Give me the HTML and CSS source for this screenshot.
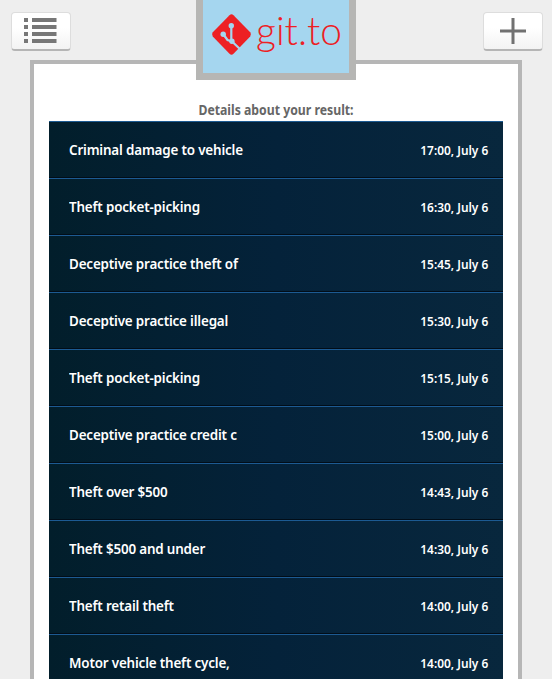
FILE: index.html
```html
<!DOCTYPE html>
<html lang="en">
<head>
<meta charset="utf-8">
<title>git.to</title>
<link rel="stylesheet" href="styles.css">
</head>
<body>
<header class="topbar">
  <button class="btn" aria-label="Menu">
    <svg width="34" height="28" viewBox="0 0 34 28" fill="#777"><path d="M0 1h4v4H0zM8 1h24.500v4H8zM0 8h4v4H0zM8 8h24.500v4H8zM0 15h4v4H0zM8 15h24.500v4H8zM0 22h4v4H0zM8 22h24.500v4H8z"/></svg>
  </button>
  <div class="logo">
    <svg width="146" height="73" viewBox="0 0 146 73">
      <path d="M26.500 15.200Q28.500 13.500 30.500 15.200L47.200 32.200Q49 34.500 47.200 36.500L30.500 53.800Q28.500 55.500 26.500 53.800L9.800 36.500Q8 34.500 9.800 32.200Z" fill="#ed2024"/>
      <path d="M28.300 26V39M20.500 34.500L24.500 40L29 41.500L38 50" fill="none" stroke="#a5d6ef" stroke-width="2.200"/>
      <circle cx="28.300" cy="25.800" r="2.700" fill="#a5d6ef"/><circle cx="20.200" cy="34.200" r="2.700" fill="#a5d6ef"/><circle cx="28.900" cy="41.300" r="2.700" fill="#a5d6ef"/>
      <text class="wordmark" x="53" y="45" textLength="86" lengthAdjust="spacingAndGlyphs">git.to</text>
    </svg>
  </div>
  <button class="btn" aria-label="Add">
    <svg width="26" height="28" viewBox="0 0 26 28" fill="#717171"><path d="M11.500 1h3v11.500H26v3H14.500V27h-3V15.500H0v-3h11.500z"/></svg>
  </button>
</header>
<main class="panel">
  <h1 class="title">Details about your result:</h1>
  <ul class="list">
    <li><span class="name">Criminal damage to vehicle</span><time>17:00, July 6</time></li>
    <li><span class="name">Theft pocket-picking</span><time>16:30, July 6</time></li>
    <li><span class="name">Deceptive practice theft of</span><time>15:45, July 6</time></li>
    <li><span class="name">Deceptive practice illegal</span><time>15:30, July 6</time></li>
    <li><span class="name">Theft pocket-picking</span><time>15:15, July 6</time></li>
    <li><span class="name">Deceptive practice credit c</span><time>15:00, July 6</time></li>
    <li><span class="name">Theft over $500</span><time>14:43, July 6</time></li>
    <li><span class="name">Theft $500 and under</span><time>14:30, July 6</time></li>
    <li><span class="name">Theft retail theft</span><time>14:00, July 6</time></li>
    <li><span class="name">Motor vehicle theft cycle,</span><time>14:00, July 6</time></li>
  </ul>
</main>
</body>
</html>
```
FILE: styles.css
```css
* { box-sizing: border-box; }
body {
  margin: 0;
  height: 679px;
  overflow: hidden;
  background: #eee;
  font-family: "Noto Sans", "Open Sans", sans-serif;
}
.topbar {
  position: relative;
  z-index: 1;
  height: 60px;
  padding: 0 9px 0 11px;
  display: flex;
  align-items: flex-start;
}
.btn {
  width: 60px;
  height: 39px;
  margin-top: 12px;
  padding: 0;
  display: flex;
  align-items: center;
  justify-content: center;
  border: 1px solid #ddd;
  border-bottom: 2px solid #b5b5b5;
  border-radius: 4px;
  background: linear-gradient(#fff 40%, #f3f3f3);
}
.logo {
  width: 160px;
  height: 80px;
  margin: 0 127px 0 125px;
  border: 7px solid #b6b6b4;
  border-top: 0;
  background: #a5d6ef;
}
.logo svg { display: block; }
.wordmark {
  font: 300 40px Lato, sans-serif;
  fill: #ed2024;
}
.panel {
  margin: 0 30px;
  height: 640px;
  padding: 36px 15px 0;
  border: 4px solid #b6b6b6;
  background: #fff;
}
.title {
  margin: 0;
  height: 21px;
  line-height: 19px;
  text-align: center;
  color: #666;
  font-size: 14px;
  font-weight: 700;
  transform: scaleX(.875);
}
.list {
  margin: 0;
  padding: 0;
  list-style: none;
  background: linear-gradient(90deg, #021e2b, #04223a 50%, #08273d);
  color: #fff;
}
.list li {
  height: 57px;
  padding: 0 15px 0 20px;
  display: flex;
  align-items: center;
  justify-content: space-between;
  border-top: 1px solid #1c5a92;
  border-bottom: 1px solid #010d18;
  white-space: nowrap;
}
.name {
  padding-bottom: 2px;
  font-size: 15px;
  font-weight: 600;
  letter-spacing: -0.2px;
  transform: scaleX(.895);
  transform-origin: left;
}
.list time {
  font-size: 13px;
  font-weight: 600;
  transform: scaleX(.915);
  transform-origin: right;
}
```
